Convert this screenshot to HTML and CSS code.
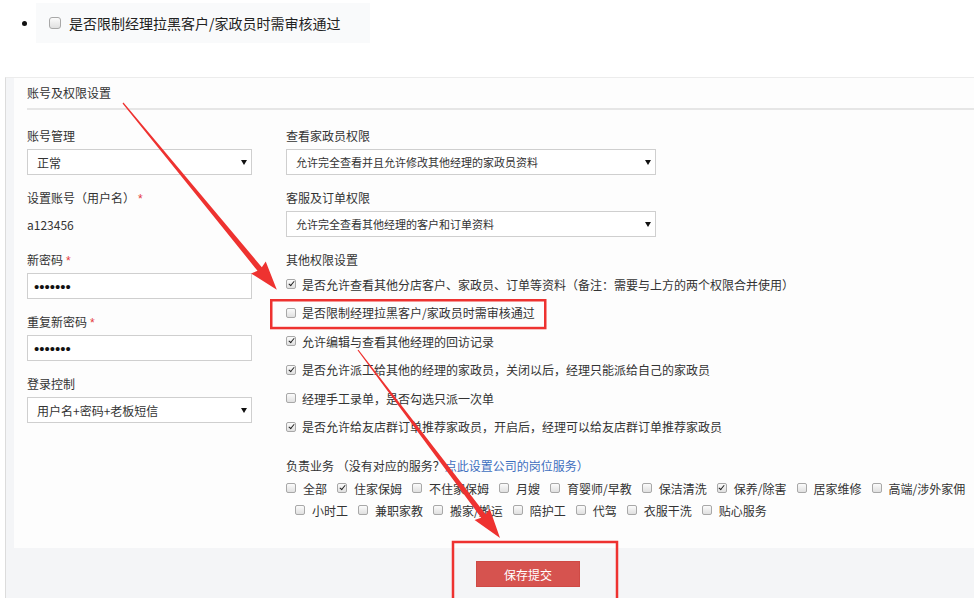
FILE: index.html
```html
<!DOCTYPE html>
<html lang="zh-CN">
<head>
<meta charset="utf-8">
<title>账号及权限设置</title>
<link rel="stylesheet" href="styles.css">
</head>
<body>
<div class="top">
  <span class="bullet"></span>
  <div class="top-box"><span class="cb cb-lg"></span><span class="top-text">是否限制经理拉黑客户/家政员时需审核通过</span></div>
</div>
<div class="panel">
  <div class="card">
    <div class="card-head">账号及权限设置</div>
    <div class="cols">
      <div class="col-left">
        <div class="field">
          <div class="label">账号管理</div>
          <div class="ctl"><span>正常</span><svg class="caret" width="6" height="5" viewBox="0 0 6 5"><polygon points="0,0 6,0 3,5"/></svg></div>
        </div>
        <div class="field">
          <div class="label">设置账号（用户名）<span class="req">*</span></div>
          <div class="value">a123456</div>
        </div>
        <div class="field">
          <div class="label">新密码<span class="req">*</span></div>
          <div class="ctl input"><span class="pw">•••••••</span></div>
        </div>
        <div class="field">
          <div class="label">重复新密码<span class="req">*</span></div>
          <div class="ctl input"><span class="pw">•••••••</span></div>
        </div>
        <div class="field">
          <div class="label">登录控制</div>
          <div class="ctl"><span>用户名+密码+老板短信</span><svg class="caret" width="6" height="5" viewBox="0 0 6 5"><polygon points="0,0 6,0 3,5"/></svg></div>
        </div>
      </div>
      <div class="col-mid">
        <div class="field">
          <div class="label">查看家政员权限</div>
          <div class="ctl wide small"><span>允许完全查看并且允许修改其他经理的家政员资料</span><svg class="caret" width="6" height="5" viewBox="0 0 6 5"><polygon points="0,0 6,0 3,5"/></svg></div>
        </div>
        <div class="field">
          <div class="label">客服及订单权限</div>
          <div class="ctl wide small"><span>允许完全查看其他经理的客户和订单资料</span><svg class="caret" width="6" height="5" viewBox="0 0 6 5"><polygon points="0,0 6,0 3,5"/></svg></div>
        </div>
        <div class="field">
          <div class="label">其他权限设置</div>
          <div class="perms">
            <div class="perm-row"><span class="cb on"></span><span class="txt">是否允许查看其他分店客户、家政员、订单等资料（备注：需要与上方的两个权限合并使用）</span></div>
            <div class="perm-row"><span class="cb"></span><span class="txt">是否限制经理拉黑客户/家政员时需审核通过</span></div>
            <div class="perm-row"><span class="cb on"></span><span class="txt">允许编辑与查看其他经理的回访记录</span></div>
            <div class="perm-row"><span class="cb on"></span><span class="txt">是否允许派工给其他的经理的家政员，关闭以后，经理只能派给自己的家政员</span></div>
            <div class="perm-row"><span class="cb"></span><span class="txt">经理手工录单，是否勾选只派一次单</span></div>
            <div class="perm-row"><span class="cb on"></span><span class="txt">是否允许给友店群订单推荐家政员，开启后，经理可以给友店群订单推荐家政员</span></div>
          </div>
        </div>
        <div class="biz-label">负责业务 （没有对应的服务？<span class="link">点此设置公司的岗位服务）</span></div>
        <div class="svc-row">
          <label class="svc"><span class="cb"></span><span>全部</span></label>
          <label class="svc"><span class="cb on"></span><span>住家保姆</span></label>
          <label class="svc"><span class="cb"></span><span>不住家保姆</span></label>
          <label class="svc"><span class="cb"></span><span>月嫂</span></label>
          <label class="svc"><span class="cb"></span><span>育婴师/早教</span></label>
          <label class="svc"><span class="cb"></span><span>保洁清洗</span></label>
          <label class="svc"><span class="cb on"></span><span>保养/除害</span></label>
          <label class="svc"><span class="cb"></span><span>居家维修</span></label>
          <label class="svc"><span class="cb"></span><span>高端/涉外家佣</span></label>
          <label class="svc"><span class="cb"></span></label>
        </div>
        <div class="svc-row second">
          <label class="svc"><span class="cb"></span><span>小时工</span></label>
          <label class="svc"><span class="cb"></span><span>兼职家教</span></label>
          <label class="svc"><span class="cb"></span><span>搬家/搬运</span></label>
          <label class="svc"><span class="cb"></span><span>陪护工</span></label>
          <label class="svc"><span class="cb"></span><span>代驾</span></label>
          <label class="svc"><span class="cb"></span><span>衣服干洗</span></label>
          <label class="svc"><span class="cb"></span><span>贴心服务</span></label>
        </div>
      </div>
    </div>
  </div>
  <div class="footer"><button class="btn" type="button">保存提交</button></div>
</div>
<svg class="annot" width="974" height="598" viewBox="0 0 974 598">
  <rect x="271.25" y="300.25" width="274" height="27.8" class="box"/>
  <rect x="453" y="542" width="164" height="70" class="box"/>
  <g transform="translate(123 103) rotate(50.53)"><polygon class="arrow" points="0,-0.6 215,-2.8 213,-9.5 242,0 213,9.5 215,2.8 0,0.6"/></g>
  <g transform="translate(358 350) rotate(52.93)"><polygon class="arrow" points="0,-0.6 208,-2.8 206,-9.5 235.6,0 206,9.5 208,2.8 0,0.6"/></g>
</svg>
</body>
</html>
```
FILE: styles.css
```css
html, body {
  margin: 0;
  width: 974px;
  height: 598px;
  overflow: hidden;
  background: #fff;
}
body {
  position: relative;
  font-family: "Noto Sans CJK SC", "Noto Sans", sans-serif;
  font-size: 12px;
  color: #333;
}

/* top item */
.top {
  height: 77px;
  box-sizing: border-box;
  padding: 3px 0 0 22px;
  display: flex;
  align-items: flex-start;
}
.bullet {
  width: 5px;
  height: 5px;
  border-radius: 50%;
  background: #111;
  margin: 18px 9px 0 0;
  flex: none;
}
.top-box {
  width: 334px;
  height: 40px;
  box-sizing: border-box;
  background: #f9fafb;
  display: flex;
  align-items: center;
  padding-left: 13px;
}
.top-text {
  font-size: 14px;
  margin-left: 8px;
  color: #222;
}

/* checkbox */
.cb {
  width: 10px;
  height: 10px;
  box-sizing: border-box;
  border: 1px solid #a8a8a8;
  border-radius: 2px;
  background: linear-gradient(#fbfbfb, #e0e0e0);
  flex: none;
  position: relative;
}
.cb-lg {
  width: 12px;
  height: 12px;
  border-radius: 3px;
}
.cb.on::after {
  content: "";
  position: absolute;
  left: 2.6px;
  top: 0.2px;
  width: 2.4px;
  height: 5px;
  border: solid #222;
  border-width: 0 1.6px 1.6px 0;
  transform: rotate(40deg);
}

/* panel */
.panel {
  margin-left: 5px;
  border-left: 1px solid #dcdcdc;
  border-top: 1px solid #ececec;
  background: #f4f5f7;
  padding-left: 8px;
  height: 520px;
}
.card {
  background: #fdfdfd;
  height: 470px;
  box-sizing: border-box;
  padding-left: 13px;
  overflow: hidden;
}
.card-head {
  height: 30px;
  line-height: 30px;
  border-bottom: 2px solid #e6e6e6;
  color: #333;
}
.cols {
  display: flex;
  padding-top: 17px;
}
.col-left {
  width: 225px;
  margin-right: 34px;
  flex: none;
}
.col-mid {
  flex: 1;
  min-width: 0;
}

.field + .field {
  margin-top: 14px;
}
.label {
  height: 17px;
  line-height: 17px;
  white-space: nowrap;
}
.req {
  color: #e4393c;
  margin-left: 3px;
  font-family: "Liberation Sans", sans-serif;
  font-size: 12px;
}
.value {
  margin: 10px 0 18px;
  height: 17px;
  line-height: 17px;
}
.ctl {
  height: 26px;
  margin-top: 5px;
  box-sizing: border-box;
  border: 1px solid #cfcfcf;
  background: #fff;
  display: flex;
  align-items: center;
  justify-content: space-between;
  padding: 0 4px 0 9px;
  color: #333;
}
.ctl.wide {
  width: 370px;
}
.ctl.small {
  font-size: 11px;
}
.ctl.input {
  padding-left: 6px;
}
.caret {
  fill: #111;
  flex: none;
}
.pw {
  font-family: "Liberation Sans", sans-serif;
  font-size: 15px;
  color: #111;
}

/* permissions */
.perms {
  margin-top: 2px;
}
.perm-row {
  height: 28.5px;
  display: flex;
  align-items: center;
  white-space: nowrap;
}
.perm-row .txt {
  margin-left: 6px;
}

.biz-label {
  margin-top: 16px;
  height: 17px;
  line-height: 17px;
  white-space: nowrap;
}
.link {
  color: #3d6fbf;
}
.svc-row {
  display: flex;
  align-items: center;
  height: 22px;
  white-space: nowrap;
}
.biz-label + .svc-row {
  margin-top: 3px;
}
.svc-row.second {
  padding-left: 9px;
}
.svc {
  display: flex;
  align-items: center;
  margin-right: 10px;
  flex: none;
}
.svc .cb + span {
  margin-left: 7px;
}

/* footer */
.footer {
  height: 50px;
  box-sizing: border-box;
  padding: 13px 0 0 462px;
}
.btn {
  width: 104px;
  height: 26px;
  padding: 0;
  border: 1px solid #cf4a45;
  border-radius: 0;
  background: #d6534f;
  color: #fff;
  font-family: inherit;
  font-size: 12px;
}

/* annotations */
.annot {
  position: absolute;
  left: 0;
  top: 0;
  pointer-events: none;
}
.annot .box {
  fill: none;
  stroke: #ee3230;
  stroke-width: 2.5;
}
.annot .arrow {
  fill: #ee3230;
}
```
